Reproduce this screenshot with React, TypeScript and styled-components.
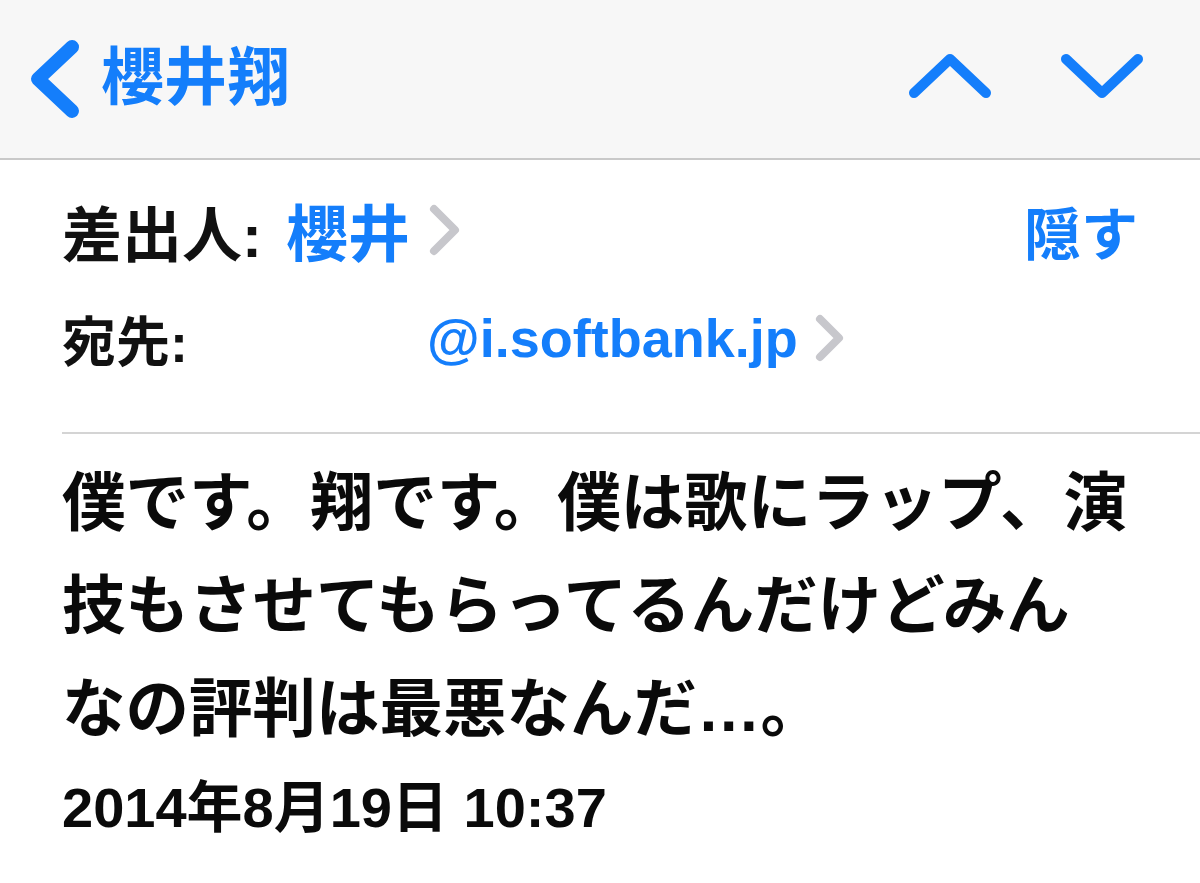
import React from "react";
import styled, { createGlobalStyle } from "styled-components";

const BLUE = "#147efb";
const GRAY_CHEVRON = "#c7c7cc";

const GlobalStyle = createGlobalStyle`
  html, body {
    margin: 0;
    padding: 0;
    background: #ffffff;
  }
  body {
    font-family: "Liberation Sans", "Noto Sans CJK JP", sans-serif;
    -webkit-font-smoothing: antialiased;
  }
`;

const Screen = styled.div`
  width: 1200px;
  height: 883px;
  overflow: hidden;
  background: #ffffff;
  display: flex;
  flex-direction: column;
`;

const NavBar = styled.header`
  height: 158px;
  flex-shrink: 0;
  background: #f7f7f7;
  border-bottom: 2px solid #c9c9c9;
  display: flex;
  align-items: center;
  padding: 0 56px 0 25px;
`;

const BackButton = styled.button`
  display: flex;
  align-items: center;
  gap: 16px;
  background: none;
  border: none;
  padding: 0;
  margin: 0;
  cursor: pointer;
  color: ${BLUE};
`;

const NavTitle = styled.span`
  font-family: "Liberation Sans", "Noto Sans CJK JP", sans-serif;
  font-size: 63px;
  font-weight: 700;
  line-height: 1;
  color: ${BLUE};
  margin-top: -4px;
`;

const NavArrows = styled.div`
  margin-left: auto;
  display: flex;
  align-items: center;
  gap: 68px;
  margin-top: -6px;
`;

const IconButton = styled.button`
  background: none;
  border: none;
  padding: 0;
  margin: 0;
  display: flex;
  cursor: pointer;
`;

const Meta = styled.section`
  display: flex;
  flex-direction: column;
  gap: 28px;
  padding: 30px 62px 0 62px;
`;

const MetaRow = styled.div<{ $size: number }>`
  height: 80px;
  display: flex;
  align-items: center;
  font-size: ${(p) => p.$size}px;
  font-weight: 700;
  color: #000;
`;

const Label = styled.span<{ $width?: number }>`
  color: #111;
  white-space: nowrap;
  ${(p) => (p.$width ? `width: ${p.$width}px;` : "margin-right: 24px;")}
`;

const Address = styled.span<{ $size?: number }>`
  color: ${BLUE};
  white-space: nowrap;
  ${(p) => (p.$size ? `font-size: ${p.$size}px;` : "")}
`;

const Disclosure = styled.span<{ $gap: number }>`
  display: flex;
  margin-left: ${(p) => p.$gap}px;
`;

const HideLink = styled.span`
  margin-left: auto;
  color: ${BLUE};
  font-size: 57px;
`;

const Divider = styled.hr`
  border: none;
  height: 2px;
  background: #d4d4d4;
  margin: 54px 0 0 62px;
`;

const Body = styled.p`
  margin: 18px 0 0 62px;
  font-size: 63.5px;
  line-height: 103px;
  font-weight: 700;
  color: #0a0a0a;
  white-space: nowrap;
`;

const DateLine = styled.div`
  margin: 12px 0 0 62px;
  font-size: 56px;
  line-height: 70px;
  font-weight: 700;
  color: #0a0a0a;
`;

const Chevron = ({
  w,
  h,
  points,
  stroke,
  color,
}: {
  w: number;
  h: number;
  points: string;
  stroke: number;
  color: string;
}) => (
  <svg width={w} height={h} viewBox={`0 0 ${w} ${h}`} fill="none">
    <polyline
      points={points}
      stroke={color}
      strokeWidth={stroke}
      strokeLinecap="round"
      strokeLinejoin="round"
    />
  </svg>
);

export default function App() {
  return (
    <Screen>
      <GlobalStyle />
      <NavBar>
        <BackButton>
          <Chevron w={60} h={88} points="47,12 13,44 47,76" stroke={14} color={BLUE} />
          <NavTitle>櫻井翔</NavTitle>
        </BackButton>
        <NavArrows>
          <IconButton aria-label="previous">
            <Chevron w={84} h={46} points="6,40 42,6 78,40" stroke={10} color={BLUE} />
          </IconButton>
          <IconButton aria-label="next">
            <Chevron w={84} h={46} points="6,6 42,40 78,6" stroke={10} color={BLUE} />
          </IconButton>
        </NavArrows>
      </NavBar>

      <Meta>
        <MetaRow $size={60}>
          <Label>差出人:</Label>
          <Address $size={62}>櫻井</Address>
          <Disclosure $gap={16}>
            <Chevron w={36} h={56} points="8,7 29,28 8,49" stroke={8} color={GRAY_CHEVRON} />
          </Disclosure>
          <HideLink>隠す</HideLink>
        </MetaRow>
        <MetaRow $size={54}>
          <Label $width={365}>宛先:</Label>
          <Address>@i.softbank.jp</Address>
          <Disclosure $gap={14}>
            <Chevron w={34} h={52} points="8,7 27,26 8,45" stroke={8} color={GRAY_CHEVRON} />
          </Disclosure>
        </MetaRow>
      </Meta>

      <Divider />

      <Body>
        僕です。翔です。僕は歌にラップ、演
        <br />
        技もさせてもらってるんだけどみん
        <br />
        なの評判は最悪なんだ…。
      </Body>

      <DateLine>2014年8月19日 10:37</DateLine>
    </Screen>
  );
}
